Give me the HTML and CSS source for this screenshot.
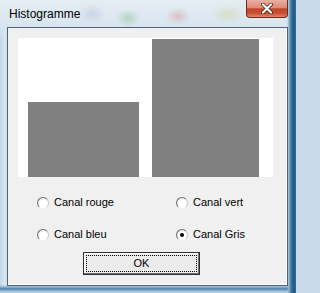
FILE: index.html
```html
<!DOCTYPE html>
<html lang="fr">
<head>
<meta charset="utf-8">
<title>Histogramme</title>
<link rel="stylesheet" href="styles.css">
</head>
<body>
<div class="window">
  <div class="titlebar">
    <span class="title">Histogramme</span>
    <div class="close">
      <svg width="12" height="11" viewBox="0 0 12 11">
        <path d="M2 1.5 L10 9.5 M10 1.5 L2 9.5" stroke="#3a2320" stroke-width="3.8" stroke-linecap="round" fill="none"/>
        <path d="M2 1.5 L10 9.5 M10 1.5 L2 9.5" stroke="#ffffff" stroke-width="2.2" stroke-linecap="round" fill="none"/>
      </svg>
    </div>
  </div>
  <div class="client">
    <div class="canvas">
      <div class="bar" style="width:111px;height:75px"></div>
      <div class="bar" style="width:107px;height:138px"></div>
    </div>
    <div class="channels">
      <label class="radio"><span class="circle"></span>Canal rouge</label>
      <label class="radio"><span class="circle"></span>Canal vert</label>
      <label class="radio"><span class="circle"></span>Canal bleu</label>
      <label class="radio"><span class="circle checked"></span>Canal Gris</label>
    </div>
    <div class="actions">
      <button class="ok"><span class="focus">OK</span></button>
    </div>
  </div>
</div>
</body>
</html>
```
FILE: styles.css
```css
html, body {
  margin: 0;
  padding: 0;
  background: #c9dbeb;
}

.window {
  width: 296px;
  height: 293px;
  box-sizing: border-box;
  padding: 0 8px 7px 7px;
  display: flex;
  flex-direction: column;
  font-family: "Liberation Sans", Arial, sans-serif;
  background:
    linear-gradient(to right, transparent 287px, #8fb3d0 289px, #3f789f 291px, #1f557d 294px, #3b6f96 296px),
    linear-gradient(to top, #b9d2e6 0, #9dbdd7 2px, #4f82aa 4px, #8db3d1 6px, transparent 8px),
    radial-gradient(ellipse 14px 10px at 92px 14px, rgba(120,150,200,0.22), transparent),
    radial-gradient(ellipse 12px 9px at 128px 18px, rgba(90,170,90,0.30), transparent),
    radial-gradient(ellipse 13px 9px at 178px 16px, rgba(200,90,100,0.26), transparent),
    radial-gradient(ellipse 16px 10px at 228px 14px, rgba(200,200,110,0.30), transparent),
    linear-gradient(to bottom, #e6edf3 0, #d9e5ef 26px, rgba(217,229,239,0) 40px),
    linear-gradient(to right, #c3d7ea 0, #dbe7f1 5px, #c5d9ea 8px, #d8e4ee 60%, #c6d9ea 100%);
}

.titlebar {
  height: 27px;
  display: flex;
  justify-content: space-between;
  align-items: flex-start;
  padding-left: 2px;
  flex: none;
}

.title {
  margin-top: 7px;
  font-size: 12px;
  line-height: 14px;
  color: #000;
}

.close {
  width: 42px;
  height: 18px;
  box-sizing: border-box;
  border: 1px solid #6b2b22;
  border-top: none;
  border-radius: 0 0 4px 4px;
  background: linear-gradient(to bottom, #ebb0a2 0, #dc8b78 45%, #c4452d 52%, #c94f33 78%, #e28766 100%);
  display: flex;
  align-items: center;
  justify-content: center;
  padding-bottom: 1px;
}

.client {
  flex: 1;
  box-sizing: border-box;
  border: 1px solid #4e6379;
  background: #f0f0f0;
  box-shadow: inset -1px -1px 0 #ffffff;
  display: flex;
  flex-direction: column;
}

.canvas {
  margin: 10px 0 0 10px;
  width: 255px;
  height: 139px;
  background: #ffffff;
  display: flex;
  align-items: flex-end;
  gap: 13px;
  box-sizing: border-box;
  padding-left: 10px;
}

.bar {
  background: #808080;
}

.channels {
  margin: 19px 0 0 29px;
  display: grid;
  grid-template-columns: 139px 100px;
  row-gap: 19px;
}

.radio {
  display: flex;
  align-items: center;
  gap: 5px;
  height: 13px;
  font-size: 11px;
  line-height: 13px;
  color: #000;
}

.circle {
  width: 12px;
  height: 12px;
  box-sizing: border-box;
  border-radius: 50%;
  border: 1px solid;
  border-color: #707070 #c9c9c9 #f2f2f2 #707070;
  background: radial-gradient(circle at 60% 60%, #ffffff 45%, #e4e4e4 80%);
  position: relative;
  flex: none;
}

.circle.checked::after {
  content: "";
  position: absolute;
  left: 3px;
  top: 3px;
  width: 4px;
  height: 4px;
  border-radius: 50%;
  background: #000;
}

.actions {
  margin: 11px 0 0 75px;
}

.ok {
  width: 117px;
  height: 23px;
  box-sizing: border-box;
  border: 1px solid #303030;
  box-shadow: inset -1px -1px 0 #6e6e6e, inset 1px 1px 0 #ffffff;
  background: #ececec;
  padding: 2px;
  margin: 0;
  font-family: "Liberation Sans", Arial, sans-serif;
  font-size: 11px;
  color: #000;
  display: flex;
}

.focus {
  flex: 1;
  border: 1px dotted #000;
  display: flex;
  align-items: center;
  justify-content: center;
  line-height: 13px;
}
```
